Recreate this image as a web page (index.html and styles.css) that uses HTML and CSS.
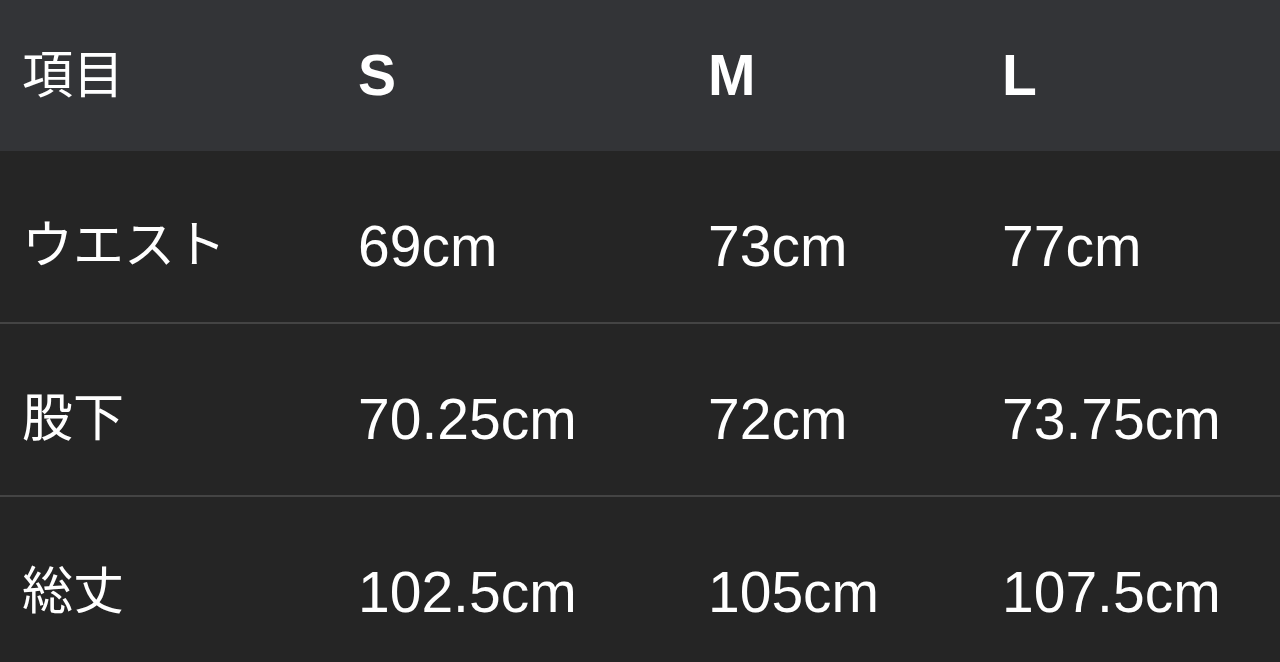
FILE: index.html
```html
<!DOCTYPE html>
<html lang="ja">
<head>
<meta charset="utf-8">
<link rel="stylesheet" href="styles.css">
</head>
<body>
<div class="table">
  <div class="row head">
    <div class="cell label">項目</div>
    <div class="cell">S</div>
    <div class="cell">M</div>
    <div class="cell">L</div>
  </div>
  <div class="row">
    <div class="cell label">ウエスト</div>
    <div class="cell">69cm</div>
    <div class="cell">73cm</div>
    <div class="cell">77cm</div>
  </div>
  <div class="row">
    <div class="cell label">股下</div>
    <div class="cell">70.25cm</div>
    <div class="cell">72cm</div>
    <div class="cell">73.75cm</div>
  </div>
  <div class="row">
    <div class="cell label">総丈</div>
    <div class="cell">102.5cm</div>
    <div class="cell">105cm</div>
    <div class="cell">107.5cm</div>
  </div>
</div>
</body>
</html>
```
FILE: styles.css
```css
html, body {
  margin: 0;
  padding: 0;
  background: #252525;
}
body {
  width: 1280px;
  height: 662px;
  overflow: hidden;
  color: #ffffff;
  font-family: "Liberation Sans", "Noto Sans CJK JP", sans-serif;
}
.table {
  display: flex;
  flex-direction: column;
}
.row {
  display: grid;
  grid-template-columns: 336px 350px 294px 1fr;
  height: 171px;
  align-items: center;
  background: #252525;
  border-bottom: 2px solid #444444;
}
.row:last-child {
  border-bottom: none;
}
.row.head {
  height: 151px;
  background: #333437;
  border-bottom: none;
}
.cell {
  padding-left: 22px;
  padding-top: 18px;
  font-size: 57px;
  line-height: 64px;
  white-space: nowrap;
}
.head .cell {
  font-weight: 700;
  padding-top: 0;
  padding-bottom: 2px;
}
.cell.label {
  font-family: "Noto Sans CJK JP", sans-serif;
  font-size: 51px;
  font-weight: 400;
  padding-top: 8px;
}
.head .cell.label {
  padding-top: 0;
  padding-bottom: 10px;
}
```
